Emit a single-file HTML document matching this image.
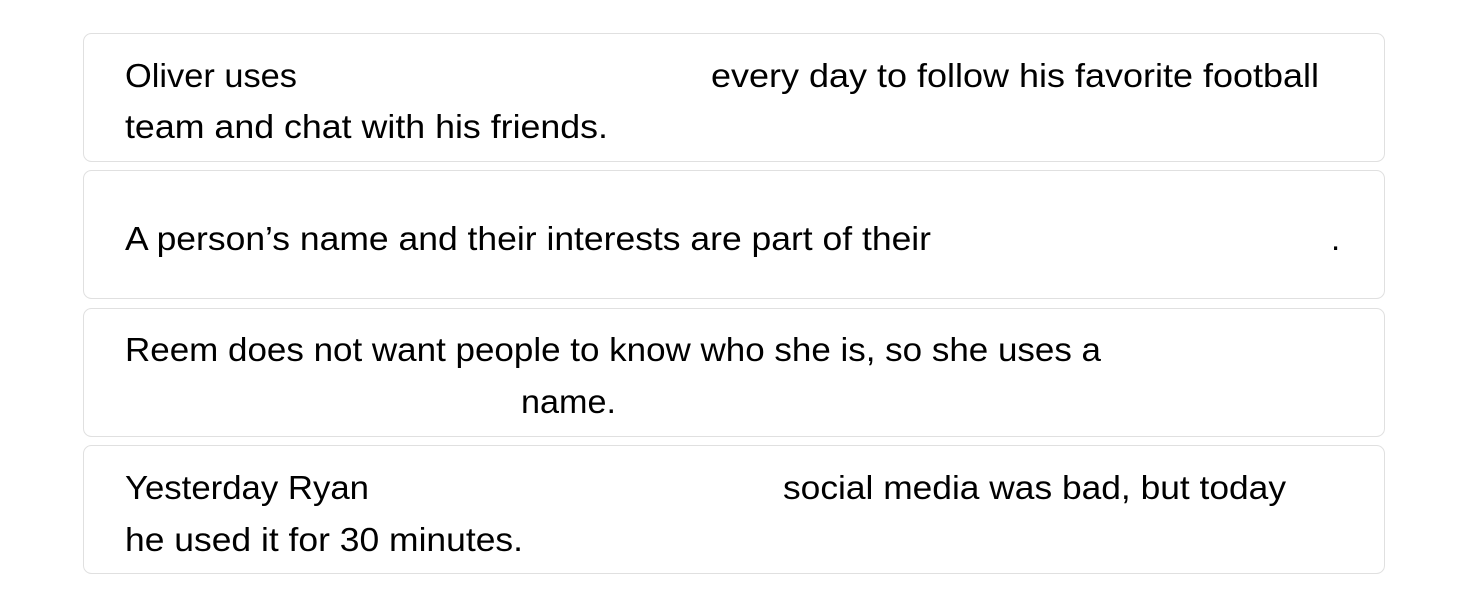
<!DOCTYPE html>
<html><head><meta charset="utf-8"><style>
html,body{margin:0;padding:0;background:#fff;width:1466px;height:600px;overflow:hidden}
svg{display:block}
text{font-family:"Liberation Sans",Arial,sans-serif;font-size:33px;fill:#000}
rect{fill:#fff;stroke:#e0e0e0;stroke-width:1}
</style></head><body>
<svg width="1466" height="600" viewBox="0 0 1466 600">
<rect x="83.5" y="33.5" width="1301" height="128" rx="8"/>
<rect x="83.5" y="170.5" width="1301" height="128" rx="8"/>
<rect x="83.5" y="308.5" width="1301" height="128" rx="8"/>
<rect x="83.5" y="445.5" width="1301" height="128" rx="8"/>
<text x="125" y="87" textLength="172" lengthAdjust="spacingAndGlyphs">Oliver uses</text>
<text x="711" y="87" textLength="608" lengthAdjust="spacingAndGlyphs">every day to follow his favorite football</text>
<text x="125" y="138" textLength="483" lengthAdjust="spacingAndGlyphs">team and chat with his friends.</text>
<text x="125" y="250" textLength="806" lengthAdjust="spacingAndGlyphs">A person’s name and their interests are part of their</text>
<text x="1331" y="250">.</text>
<text x="125" y="361" textLength="976" lengthAdjust="spacingAndGlyphs">Reem does not want people to know who she is, so she uses a</text>
<text x="521" y="413" textLength="95" lengthAdjust="spacingAndGlyphs">name.</text>
<text x="125" y="499" textLength="244" lengthAdjust="spacingAndGlyphs">Yesterday Ryan</text>
<text x="783" y="499" textLength="503" lengthAdjust="spacingAndGlyphs">social media was bad, but today</text>
<text x="125" y="551" textLength="398" lengthAdjust="spacingAndGlyphs">he used it for 30 minutes.</text>
</svg>
</body></html>
